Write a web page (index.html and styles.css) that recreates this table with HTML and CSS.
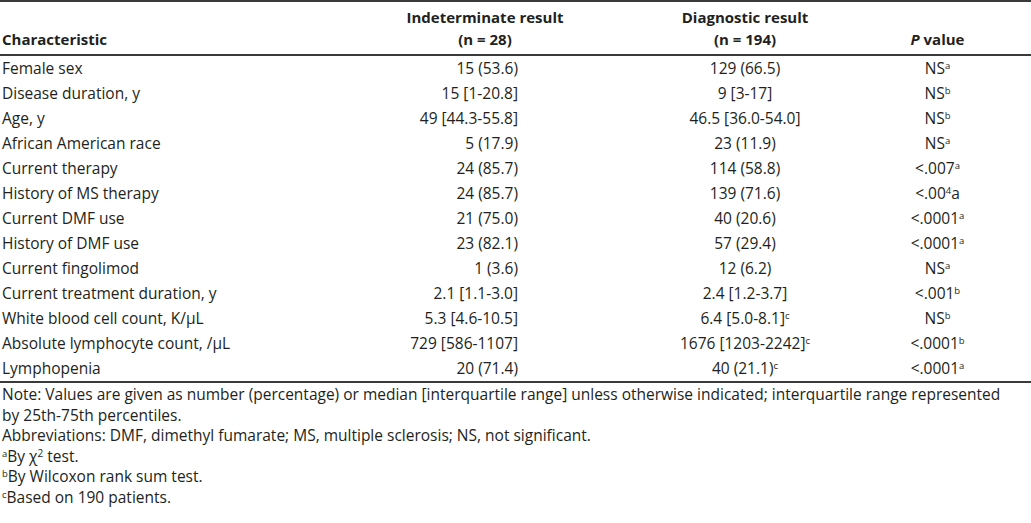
FILE: index.html
```html
<!DOCTYPE html>
<html>
<head>
<meta charset="utf-8">
<link rel="stylesheet" href="styles.css">
</head>
<body>
<div class="page">
<table class="tbl">
  <colgroup>
    <col class="c1"><col class="c2"><col class="c3"><col class="c4">
  </colgroup>
  <thead>
    <tr>
      <th class="h1">Characteristic</th>
      <th class="h2">Indeterminate result<br>(n = 28)</th>
      <th class="h3">Diagnostic result<br>(n = 194)</th>
      <th class="h4"><i>P</i> value</th>
    </tr>
  </thead>
  <tbody>
    <tr><td>Female sex</td><td class="v2">15 (53.6)</td><td class="v3">129 (66.5)</td><td class="v4">NS<sup>a</sup></td></tr>
    <tr><td>Disease duration, y</td><td class="v2">15 [1-20.8]</td><td class="v3">9 [3-17]</td><td class="v4">NS<sup>b</sup></td></tr>
    <tr><td>Age, y</td><td class="v2">49 [44.3-55.8]</td><td class="v3">46.5 [36.0-54.0]</td><td class="v4">NS<sup>b</sup></td></tr>
    <tr><td>African American race</td><td class="v2">5 (17.9)</td><td class="v3">23 (11.9)</td><td class="v4">NS<sup>a</sup></td></tr>
    <tr><td>Current therapy</td><td class="v2">24 (85.7)</td><td class="v3">114 (58.8)</td><td class="v4">&lt;.007<sup>a</sup></td></tr>
    <tr><td>History of MS therapy</td><td class="v2">24 (85.7)</td><td class="v3">139 (71.6)</td><td class="v4">&lt;.00<sup>4</sup>a</td></tr>
    <tr><td>Current DMF use</td><td class="v2">21 (75.0)</td><td class="v3">40 (20.6)</td><td class="v4">&lt;.0001<sup>a</sup></td></tr>
    <tr><td>History of DMF use</td><td class="v2">23 (82.1)</td><td class="v3">57 (29.4)</td><td class="v4">&lt;.0001<sup>a</sup></td></tr>
    <tr><td>Current fingolimod</td><td class="v2">1 (3.6)</td><td class="v3">12 (6.2)</td><td class="v4">NS<sup>a</sup></td></tr>
    <tr><td>Current treatment duration, y</td><td class="v2">2.1 [1.1-3.0]</td><td class="v3">2.4 [1.2-3.7]</td><td class="v4">&lt;.001<sup>b</sup></td></tr>
    <tr><td>White blood cell count, K/µL</td><td class="v2">5.3 [4.6-10.5]</td><td class="v3">6.4 [5.0-8.1]<sup>c</sup></td><td class="v4">NS<sup>b</sup></td></tr>
    <tr><td>Absolute lymphocyte count, /µL</td><td class="v2">729 [586-1107]</td><td class="v3">1676 [1203-2242]<sup>c</sup></td><td class="v4">&lt;.0001<sup>b</sup></td></tr>
    <tr><td>Lymphopenia</td><td class="v2">20 (71.4)</td><td class="v3">40 (21.1)<sup>c</sup></td><td class="v4">&lt;.0001<sup>a</sup></td></tr>
  </tbody>
</table>
<div class="notes">
  <p>Note: Values are given as number (percentage) or median [interquartile range] unless otherwise indicated; interquartile range represented by 25th-75th percentiles.</p>
  <p>Abbreviations: DMF, dimethyl fumarate; MS, multiple sclerosis; NS, not significant.</p>
  <p><sup>a</sup>By χ<sup class="sq">2</sup> test.</p>
  <p><sup>b</sup>By Wilcoxon rank sum test.</p>
  <p><sup>c</sup>Based on 190 patients.</p>
</div>
</div>
</body>
</html>
```
FILE: styles.css
```css
html, body {
  margin: 0;
  padding: 0;
  background: #ffffff;
}
body {
  font-family: "Open Sans", "Liberation Sans", sans-serif;
  font-size: 15.5px;
  color: #231f20;
}
.page {
  width: 1031px;
}
.tbl {
  width: 1031px;
  border-collapse: collapse;
  table-layout: fixed;
  border-top: 2px solid #3a3a3a;
  border-bottom: 2px solid #3a3a3a;
}
.c1 { width: 380px; }
.c2 { width: 210px; }
.c3 { width: 310px; }
.c4 { width: 131px; }
th {
  font-size: 15px;
  font-weight: 700;
  line-height: 22px;
  padding: 4px 0 4px 0;
  vertical-align: bottom;
  border-bottom: 2px solid #3a3a3a;
  white-space: nowrap;
}
.h1 { text-align: left; padding-left: 2px; }
.h2, .h3 { text-align: center; }
.h4 { text-align: center; padding-right: 56px; }
.h4 i { font-style: italic; }
td {
  padding: 0;
  height: 25px;
  line-height: 25px;
  white-space: nowrap;
}
td:first-child { padding-left: 2px; }
.v2 { text-align: right; padding-right: 72px; }
.v3 { text-align: center; }
.v4 { text-align: center; padding-right: 56px; }
sup {
  font-size: 9.5px;
  line-height: 0;
  vertical-align: 5px;
}
.notes {
  padding: 1px 0 0 2px;
}
.notes p {
  margin: 0;
  line-height: 20.5px;
  width: 1008px;
}
.notes .sq { font-size: 10px; }
```
